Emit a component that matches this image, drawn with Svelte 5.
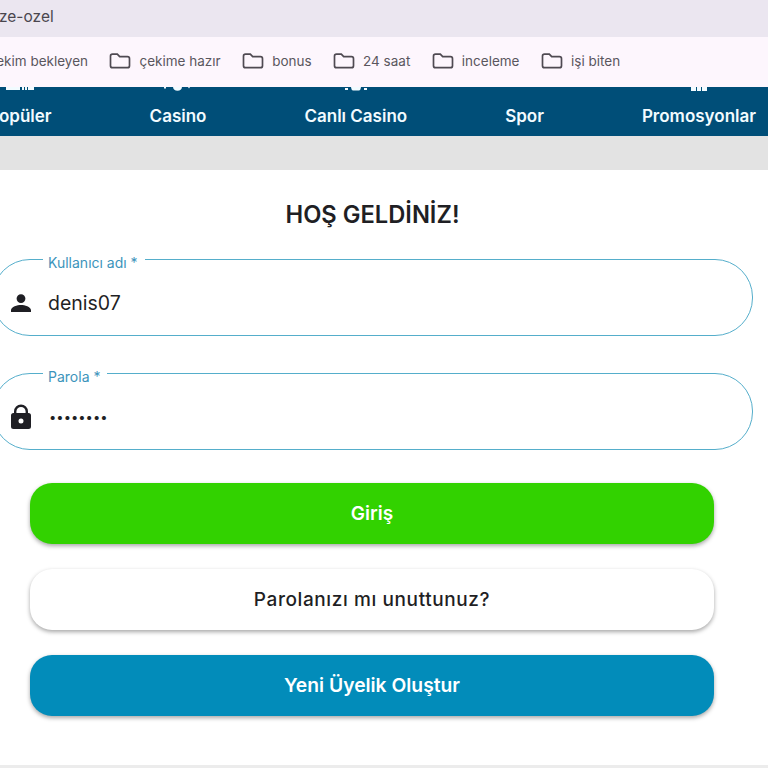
<script>
    const bookmarks = ["çekime hazır", "bonus", "24 saat", "inceleme", "işi biten"];
    // only the bottom edge of each tab icon shows under the bookmarks bar
    const tabs = [
        { name: "Popüler", icon: "M0 0h14v3H0zM16 0h2v3h-2zM19 0h2v3h-2zM22 0h6v3h-6z" },
        { name: "Casino", icon: "M0 0h2v1.500H0zM9 0h9q-.5 3.800-4.500 3.800T9 0zM24 0h2l-1 1.500z" },
        { name: "Canlı Casino", icon: "M3 1h3v2H3zM9 0h10q-.5 3.600-2 3.600h-6Q9.500 3.600 9 0zM22 1h3v2h-3z" },
        { name: "Spor", icon: "" },
        { name: "Promosyonlar", icon: "M6 0h5v4H6zM12 0h4v4h-4zM17 0h5v4h-5z" },
    ];
</script>

<div class="page">
    <div class="address">ze-ozel</div>

    <div class="bookmarks">
        <span class="bookmark first">çekim bekleyen</span>
        {#each bookmarks as b}
            <span class="bookmark">
                <svg width="22" height="16" viewBox="0 0 22 16" fill="none" stroke="#4f4a52" stroke-width="1.7">
                    <path d="M1.500 3.200q0-2 2-2h4.800l2.400 2.500h7.800q2 0 2 2v7q0 2-2 2h-15q-2 0-2-2z" />
                </svg>
                {b}
            </span>
        {/each}
    </div>

    <nav>
        {#each tabs as t}
            <span class="tab">
                <svg width="28" height="4" viewBox="0 0 28 4" fill="#f2fbff">
                    <path d={t.icon} />
                </svg>
                {t.name}
            </span>
        {/each}
    </nav>

    <div class="strip"></div>

    <main>
        <h1>HOŞ GELDİNİZ!</h1>

        <fieldset>
            <legend>Kullanıcı adı *</legend>
            <svg width="24" height="24" viewBox="0 0 24 24" fill="#1f1f24">
                <path d="M12 12a4.400 4.400 0 1 0 0-8.800a4.400 4.400 0 0 0 0 8.800zm0 2c-3.600 0-10 1.800-10 5.200V21h20v-1.800c0-3.400-6.400-5.200-10-5.200z" />
            </svg>
            <span class="value">denis07</span>
        </fieldset>

        <fieldset>
            <legend>Parola *</legend>
            <svg width="24" height="26" viewBox="0 0 24 26" fill="#1f1f24">
                <path fill-rule="evenodd" d="M5 9V7.500a7 7 0 0 1 14 0V9h.5a2.500 2.500 0 0 1 2.500 2.500v11a2.500 2.500 0 0 1-2.500 2.500h-15A2.500 2.500 0 0 1 2 22.500v-11A2.500 2.500 0 0 1 4.500 9zm2.400 0h9.200V7.500a4.600 4.600 0 0 0-9.200 0zM12 19.500a2.500 2.500 0 1 0 0-5a2.500 2.500 0 0 0 0 5z" />
            </svg>
            <span class="value dots">••••••••</span>
        </fieldset>

        <div class="actions">
            <button class="green">Giriş</button>
            <button class="white">Parolanızı mı unuttunuz?</button>
            <button class="blue">Yeni Üyelik Oluştur</button>
        </div>
    </main>

    <div class="foot"></div>
</div>

<style>
    :global(body) {
        margin: 0;
        background: #fff;
        overflow: hidden;
    }
    .page {
        width: 768px;
        height: 768px;
        overflow: hidden;
        font-family: Inter, "Liberation Sans", sans-serif;
        display: flex;
        flex-direction: column;
    }
    .address {
        height: 37px;
        flex: none;
        background: #ebe6f0;
        color: #4a464e;
        font-size: 15.500px;
        line-height: 33px;
        text-indent: -1px;
    }
    .bookmarks {
        height: 50px;
        flex: none;
        box-sizing: border-box;
        padding-bottom: 2px;
        background: #fdf6fd;
        display: flex;
        align-items: center;
        gap: 21.500px;
        color: #5a565e;
        font-size: 13.500px;
        white-space: nowrap;
    }
    .bookmark {
        flex: none;
        display: flex;
        align-items: center;
        gap: 8px;
    }
    .first {
        margin-left: -11.500px;
    }
    nav {
        height: 49px;
        flex: none;
        box-sizing: border-box;
        padding-right: 12px;
        background: #004e78;
        color: #f2fbff;
        font-size: 17px;
        font-weight: 600;
        line-height: 20px;
        white-space: nowrap;
        display: flex;
        justify-content: flex-end;
        gap: 98px;
    }
    .tab {
        flex: none;
        display: flex;
        flex-direction: column;
        align-items: center;
        gap: 15px;
    }
    .strip {
        height: 34px;
        flex: none;
        background: #e3e3e3;
    }
    main {
        flex: 1;
        width: 761px;
        margin-left: -8px;
        background: #fff;
    }
    h1 {
        margin: 31px 0 19px;
        text-align: center;
        font-size: 23.700px;
        line-height: 28px;
        font-weight: 600;
        color: #1f1f24;
    }
    fieldset {
        margin: 0 0 26px;
        height: 88px;
        box-sizing: border-box;
        border: 1px solid #55aecb;
        border-radius: 38px;
        padding: 0 0 0 16px;
        display: flex;
        align-items: center;
        gap: 15px;
    }
    legend {
        margin-left: 34px;
        padding: 8px 7px 0 5px;
        color: #3d94bb;
        font-size: 14px;
        line-height: 14px;
    }
    .value {
        font-size: 19.500px;
        color: #1f1f24;
    }
    .dots {
        font-size: 13px;
        margin-left: 1px;
    }
    .actions {
        margin: 33px 39px 0 38px;
        display: flex;
        flex-direction: column;
        gap: 25px;
    }
    button {
        height: 61px;
        border: 0;
        border-radius: 22px;
        font: 600 19px Inter, "Liberation Sans", sans-serif;
        box-shadow: 0 2px 4px rgba(0, 0, 0, 0.35);
    }
    .green {
        background: #32d200;
        color: #fff;
    }
    .white {
        background: #fff;
        color: #1f1f24;
        font-weight: 500;
        letter-spacing: 0.6px;
    }
    .blue {
        background: #028cba;
        color: #fff;
        font-size: 19.300px;
        padding-bottom: 3px;
    }
    .foot {
        height: 3px;
        flex: none;
        background: #ececec;
    }
</style>
